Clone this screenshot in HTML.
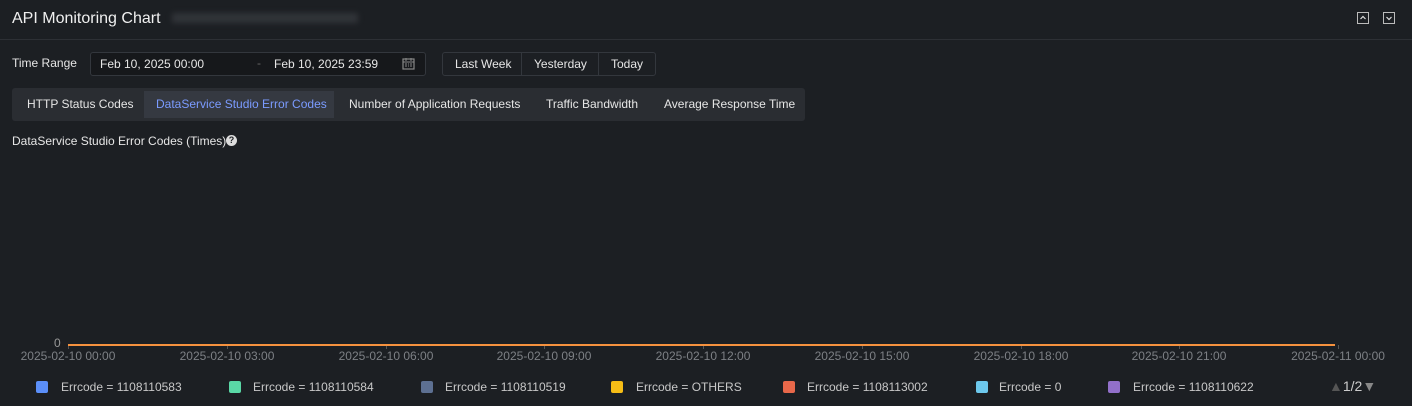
<!DOCTYPE html>
<html><head><style>
body{margin:0;width:1412px;height:406px;background:#1c1f23;font-family:"Liberation Sans",sans-serif;color:#e6e6e6;position:relative;overflow:hidden}
.a{position:absolute;white-space:nowrap}
.t{font-size:12px}
.box{position:absolute;border:1px solid #33373d;border-radius:3px;background:#16181b}
.xl{position:absolute;top:349px;font-size:12px;color:#7d8085;transform:translateX(-50%);white-space:nowrap}
.tk{position:absolute;top:345px;width:1px;height:4px;background:#555}
.lg{position:absolute;top:381px;width:12px;height:12px;border-radius:2px}
.lt{position:absolute;top:380px;font-size:12px;color:#c8c8c8;white-space:nowrap}
</style></head><body>
<div class="a" style="left:12px;top:10px;font-size:16px;color:#f0f0f0">API Monitoring Chart</div>
<div class="a" style="left:172px;top:13px;width:186px;height:10px;background:#3a3d42;filter:blur(3px);opacity:.7"></div>
<svg class="a" style="left:1357px;top:12px" width="12" height="12"><rect x="0.5" y="0.5" width="11" height="11" fill="none" stroke="#bbb"/><path d="M3.5 7l2.5-2.5 2.5 2.5" fill="none" stroke="#ddd" stroke-width="1.2"/></svg>
<svg class="a" style="left:1383px;top:12px" width="12" height="12"><rect x="0.5" y="0.5" width="11" height="11" fill="none" stroke="#bbb"/><path d="M3.5 5l2.5 2.5 2.5-2.5" fill="none" stroke="#ddd" stroke-width="1.2"/></svg>
<div class="a" style="left:0;top:39px;width:1412px;height:1px;background:#2d3035"></div>
<div class="a t" style="left:12px;top:56px">Time Range</div>
<div class="box" style="left:90px;top:52px;width:334px;height:22px"></div>
<div class="a t" style="left:100px;top:57px">Feb 10, 2025 00:00</div>
<div class="a t" style="left:257px;top:56px;color:#666">-</div>
<div class="a t" style="left:274px;top:57px">Feb 10, 2025 23:59</div>
<svg class="a" style="left:402px;top:57px" width="13" height="13"><rect x="1" y="2" width="11" height="10" fill="none" stroke="#888" stroke-width="1.2"/><path d="M4 1v3M9 1v3M1 5h11M3 7h2M6 7h1M8 7h2M3 9h2M6 9h1M8 9h2" stroke="#888"/></svg>
<div class="box" style="left:442px;top:52px;width:212px;height:22px;background:#1c1f23"></div>
<div class="a" style="left:521px;top:53px;width:1px;height:22px;background:#33373d"></div>
<div class="a" style="left:598px;top:53px;width:1px;height:22px;background:#33373d"></div>
<div class="a t" style="left:455px;top:57px">Last Week</div>
<div class="a t" style="left:534px;top:57px">Yesterday</div>
<div class="a t" style="left:611px;top:57px">Today</div>
<div class="a" style="left:12px;top:88px;width:793px;height:33px;background:#2a2d32;border-radius:3px"></div>
<div class="a" style="left:144px;top:91px;width:190px;height:27px;background:#353941"></div>
<div class="a t" style="left:27px;top:97px">HTTP Status Codes</div>
<div class="a t" style="left:156px;top:97px;color:#7b9bff">DataService Studio Error Codes</div>
<div class="a t" style="left:349px;top:97px">Number of Application Requests</div>
<div class="a t" style="left:546px;top:97px">Traffic Bandwidth</div>
<div class="a t" style="left:664px;top:97px">Average Response Time</div>
<div class="a t" style="left:12px;top:134px">DataService Studio Error Codes (Times)</div>
<div class="a" style="left:226px;top:135px;width:11px;height:11px;border-radius:50%;background:#ddd;color:#1c1f23;font-size:9px;font-weight:bold;text-align:center;line-height:11px">?</div>
<div class="a" style="left:54px;top:336px;font-size:12px;color:#999">0</div>
<div class="tk" style="left:68px"></div><div class="tk" style="left:227px"></div><div class="tk" style="left:386px"></div><div class="tk" style="left:544px"></div><div class="tk" style="left:703px"></div><div class="tk" style="left:862px"></div><div class="tk" style="left:1021px"></div><div class="tk" style="left:1179px"></div><div class="tk" style="left:1338px"></div>
<div class="a" style="left:68px;top:344px;width:1267px;height:2px;background:#f5913e"></div>
<div class="xl" style="left:68px">2025-02-10 00:00</div>
<div class="xl" style="left:227px">2025-02-10 03:00</div>
<div class="xl" style="left:386px">2025-02-10 06:00</div>
<div class="xl" style="left:544px">2025-02-10 09:00</div>
<div class="xl" style="left:703px">2025-02-10 12:00</div>
<div class="xl" style="left:862px">2025-02-10 15:00</div>
<div class="xl" style="left:1021px">2025-02-10 18:00</div>
<div class="xl" style="left:1179px">2025-02-10 21:00</div>
<div class="xl" style="left:1338px">2025-02-11 00:00</div>
<div class="lg" style="left:36px;background:#5b8ff9"></div><div class="lt" style="left:61px">Errcode = 1108110583</div>
<div class="lg" style="left:229px;background:#5ad8a6"></div><div class="lt" style="left:253px">Errcode = 1108110584</div>
<div class="lg" style="left:421px;background:#5d7092"></div><div class="lt" style="left:445px">Errcode = 1108110519</div>
<div class="lg" style="left:611px;background:#f6bd16"></div><div class="lt" style="left:636px">Errcode = OTHERS</div>
<div class="lg" style="left:783px;background:#e8684a"></div><div class="lt" style="left:807px">Errcode = 1108113002</div>
<div class="lg" style="left:976px;background:#6dc8ec"></div><div class="lt" style="left:999px">Errcode = 0</div>
<div class="lg" style="left:1108px;background:#9270ca"></div><div class="lt" style="left:1133px">Errcode = 1108110622</div>
<div class="lt" style="left:1329px;top:378px;font-size:14px;color:#ccc"><span style="color:#555">▲</span>1/2<span style="color:#888">▼</span></div>
</body></html>
